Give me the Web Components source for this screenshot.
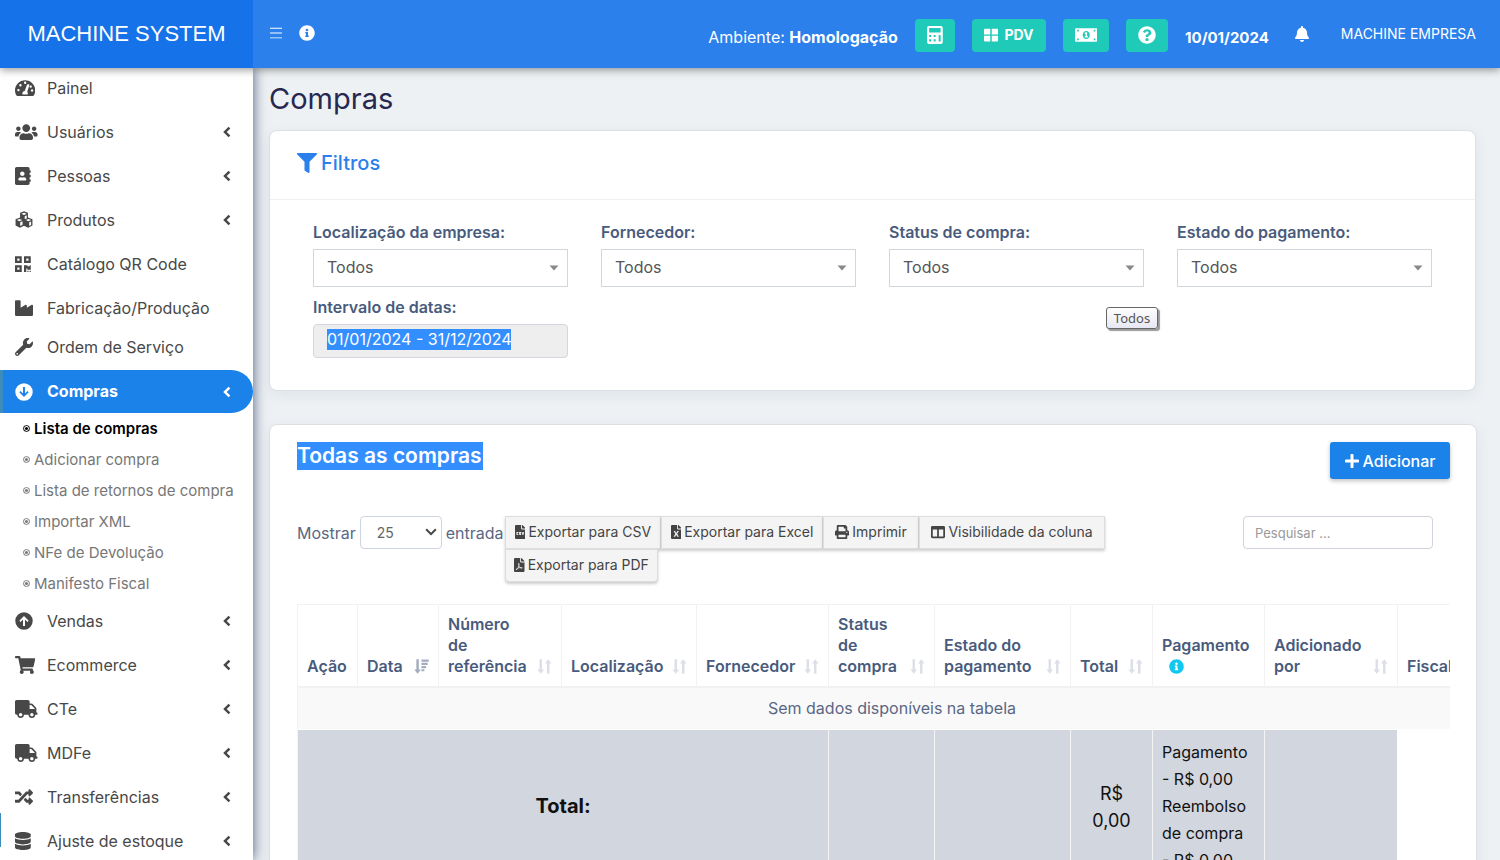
<!DOCTYPE html>
<html lang="pt-BR">
<head>
<meta charset="utf-8">
<title>Compras - Machine System</title>
<style>
  html, body { height: 100%; margin: 0; }
  body { font: 16px/21px Inter, "Open Sans", sans-serif; color: #5a6784; background: #edf1f4; }
</style>
</head>
<body>
<ms-app></ms-app>
<script>
const ICONS = {
  gauge: [576, 'M288 32C129 32 0 161 0 320c0 53 14 102 39 145 6 10 16 15 27 15h444c11 0 21-5 27-15 25-43 39-92 39-145C576 161 447 32 288 32zM288 72a34 34 0 1 1 0 68 34 34 0 0 1 0-68zM98 350a34 34 0 1 1 0-68 34 34 0 0 1 0 68zM154 210a34 34 0 1 1 0-68 34 34 0 0 1 0 68zM392 150c12 4 19 17 15 30l-60 186c12 12 19 29 19 46 0 12-3 22-8 32H218c-5-10-8-20-8-32 0-38 29-68 66-71l66-178c4-13 37-17 50-13zM446 250a34 34 0 1 1 0-68 34 34 0 0 1 0 68zM486 360a34 34 0 1 1 0-68 34 34 0 0 1 0 68z'],
  users: [640, 'M96 224c35.3 0 64-28.7 64-64s-28.7-64-64-64-64 28.7-64 64 28.7 64 64 64zm448 0c35.3 0 64-28.7 64-64s-28.7-64-64-64-64 28.7-64 64 28.7 64 64 64zm32 32h-64c-17.6 0-33.5 7.1-45.1 18.6 40.3 22.1 68.9 62 75.1 109.4h66c17.7 0 32-14.3 32-32v-32c0-35.3-28.7-64-64-64zm-256 0c61.9 0 112-50.1 112-112S381.9 32 320 32 208 82.1 208 144s50.1 112 112 112zm76.8 32h-8.3c-20.8 10-43.9 16-68.5 16s-47.6-6-68.5-16h-8.3C179.6 288 128 339.6 128 403.2V432c0 26.5 21.5 48 48 48h288c26.5 0 48-21.5 48-48v-28.8c0-63.6-51.6-115.2-115.2-115.2zm-223.7-13.4C161.5 263.1 145.6 256 128 256H64c-35.3 0-64 28.7-64 64v32c0 17.7 14.3 32 32 32h65.9c6.3-47.4 34.9-87.3 75.2-109.4z'],
  book: [448, 'M436 160c6.6 0 12-5.4 12-12v-40c0-6.6-5.4-12-12-12h-20V48c0-26.5-21.5-48-48-48H48C21.5 0 0 21.5 0 48v416c0 26.5 21.5 48 48 48h320c26.5 0 48-21.5 48-48v-48h20c6.6 0 12-5.4 12-12v-40c0-6.6-5.4-12-12-12h-20v-64h20c6.6 0 12-5.4 12-12v-40c0-6.6-5.4-12-12-12h-20v-64h20zm-228-32c35.3 0 64 28.7 64 64s-28.7 64-64 64-64-28.7-64-64 28.7-64 64-64zm112 236.8c0 10.6-10 19.2-22.4 19.2H118.4C106 384 96 375.4 96 364.8v-19.2c0-31.8 30.1-57.6 67.2-57.6h5c12.3 5.1 25.7 8 39.8 8s27.6-2.9 39.8-8h5c37.1 0 67.2 25.8 67.2 57.6v19.2z'],
  cubes: [512, 'M256 8l112 44v134l128 50v176l-124 62-116-58-116 58-124-62V236l128-50V52zM256 50l-76 30 76 32 76-32zM276 146v92l58-26v-92zM128 226l-76 30 76 32 76-32zM384 226l-76 30 76 32 76-32zM148 322v102l66-33v-98zM404 322v102l54-27v-100z'],
  qr: [448, 'M0 224h192V32H0v192zM64 96h64v64H64V96zm192-64v192h192V32H256zm128 128h-64V96h64v64zM0 480h192V288H0v192zm64-128h64v64H64v-64zm352-64h32v128h-96v-32h-32v96h-64V288h96v32h64v-32zm0 160h32v32h-32v-32zm-64 0h32v32h-32v-32z'],
  industry: [512, 'M475.115 163.781L336 252.309v-68.28c0-18.916-20.931-30.399-36.885-20.248L160 252.309V56c0-13.255-10.745-24-24-24H24C10.745 32 0 42.745 0 56v400c0 13.255 10.745 24 24 24h464c13.255 0 24-10.745 24-24V184.029c0-18.917-20.931-30.399-36.885-20.248z'],
  wrench: [512, 'M507.73 109.1c-2.24-9.03-13.54-12.09-20.12-5.51l-74.36 74.36-67.88-11.31-11.31-67.88 74.36-74.36c6.62-6.62 3.43-17.9-5.66-20.16-47.38-11.74-99.55.91-136.58 37.93-39.64 39.64-50.55 97.1-34.05 147.2L18.74 402.76c-24.99 24.99-24.99 65.51 0 90.5 24.99 24.99 65.51 24.99 90.5 0l213.21-213.21c50.12 16.71 107.47 5.68 147.37-34.22 37.07-37.07 49.7-89.32 37.91-136.73zM64 472a24 24 0 1 1 0-48 24 24 0 0 1 0 48z'],
  down: [512, 'M256 8a248 248 0 1 0 0 496 248 248 0 0 0 0-496zM284 112v188l70-72 36 38-134 134-134-134 36-38 70 72V112z'],
  up: [512, 'M256 504a248 248 0 1 0 0-496 248 248 0 0 0 0 496zM228 400V212l-70 72-36-38 134-134 134 134-36 38-70-72v188z'],
  cart: [576, 'M528.12 301.319l47.273-208C578.806 78.301 567.391 64 551.99 64H159.208l-9.166-44.81C147.758 8.021 137.93 0 126.529 0H24C10.745 0 0 10.745 0 24v16c0 13.255 10.745 24 24 24h69.883l70.248 343.435C147.325 417.1 136 435.222 136 456c0 30.928 25.072 56 56 56s56-25.072 56-56c0-15.674-6.447-29.835-16.824-40h209.647C430.447 426.165 424 440.326 424 456c0 30.928 25.072 56 56 56s56-25.072 56-56c0-22.172-12.888-41.332-31.579-50.405l5.517-24.276c3.413-15.018-8.002-29.319-23.403-29.319H218.117l-6.545-32h293.145c11.206 0 20.92-7.754 23.403-18.681z'],
  truck: [640, 'M624 352h-16V243.9c0-12.7-5.1-24.9-14.1-33.9L494 110.1c-9-9-21.2-14.1-33.9-14.1H416V48c0-26.5-21.5-48-48-48H48C21.5 0 0 21.5 0 48v320c0 26.5 21.5 48 48 48h16c0 53 43 96 96 96s96-43 96-96h128c0 53 43 96 96 96s96-43 96-96h48c8.8 0 16-7.2 16-16v-32c0-8.8-7.2-16-16-16zM160 464c-26.5 0-48-21.5-48-48s21.5-48 48-48 48 21.5 48 48-21.5 48-48 48zm320 0c-26.5 0-48-21.5-48-48s21.5-48 48-48 48 21.5 48 48-21.5 48-48 48zm80-208H416V144h44.1l99.9 99.9V256z'],
  random: [512, 'M504.971 359.029c9.373 9.373 9.373 24.569 0 33.941l-80 79.984c-15.01 15.01-40.971 4.49-40.971-16.971V416h-58.785a12.004 12.004 0 0 1-8.773-3.812l-70.556-75.596 53.333-57.143L352 336h32v-39.981c0-21.438 25.943-31.998 40.971-16.971l80 79.981zM12 176h84l52.781 56.551 53.333-57.143-70.556-75.596A11.999 11.999 0 0 0 122.785 96H12c-6.627 0-12 5.373-12 12v56c0 6.627 5.373 12 12 12zm372 0v39.984c0 21.46 25.961 31.98 40.971 16.971l80-79.984c9.373-9.373 9.373-24.569 0-33.941l-80-79.981C409.943 24.021 384 34.582 384 56.019V96h-58.785a12.004 12.004 0 0 0-8.773 3.812L96 336H12c-6.627 0-12 5.373-12 12v56c0 6.627 5.373 12 12 12h110.785c3.326 0 6.503-1.381 8.773-3.812L352 176h32z', 'nonzero'],
  database: [448, 'M448 73.143v45.714C448 159.143 347.667 192 224 192S0 159.143 0 118.857V73.143C0 32.857 100.333 0 224 0s224 32.857 224 73.143zM448 176v102.857C448 319.143 347.667 352 224 352S0 319.143 0 278.857V176c48.125 33.143 136.208 48.572 224 48.572S399.874 209.143 448 176zm0 160v102.857C448 479.143 347.667 512 224 512S0 479.143 0 438.857V336c48.125 33.143 136.208 48.572 224 48.572S399.874 369.143 448 336z'],
  chevron: [288, 'M204 60l64 64-132 132 132 132-64 64L8 256z'],
  filter: [512, 'M487.976 0H24.028C2.71 0-8.047 25.866 7.058 40.971L192 225.941V432c0 7.831 3.821 15.17 10.237 19.662l80 55.98C298.02 518.69 320 507.493 320 487.98V225.941l184.947-184.97C520.021 25.896 509.338 0 487.976 0z'],
  plus: [448, 'M416 208H272V64c0-17.67-14.33-32-32-32h-32c-17.67 0-32 14.33-32 32v144H32c-17.67 0-32 14.33-32 32v32c0 17.67 14.33 32 32 32h144v144c0 17.67 14.33 32 32 32h32c17.67 0 32-14.33 32-32V304h144c17.67 0 32-14.33 32-32v-32c0-17.67-14.33-32-32-32z'],
  question: [512, 'M504 256c0 136.997-111.043 248-248 248S8 392.997 8 256C8 119.083 119.043 8 256 8s248 111.083 248 248zM262.655 90c-54.497 0-89.255 22.957-116.549 63.758-3.536 5.286-2.353 12.415 2.715 16.258l34.699 26.31c5.205 3.947 12.621 3.008 16.665-2.122 17.864-22.658 30.113-35.797 57.303-35.797 20.429 0 45.698 13.148 45.698 32.958 0 14.976-12.363 22.667-32.534 33.976C247.128 238.528 216 254.941 216 296v4c0 6.627 5.373 12 12 12h56c6.627 0 12-5.373 12-12v-1.333c0-28.462 83.186-29.647 83.186-106.667 0-58.002-60.165-102-116.531-102zM256 338c-25.365 0-46 20.635-46 46 0 25.364 20.635 46 46 46s46-20.636 46-46c0-25.365-20.635-46-46-46z'],
  info: [512, 'M256 8C119.043 8 8 119.083 8 256c0 136.997 111.043 248 248 248s248-111.003 248-248C504 119.083 392.957 8 256 8zm0 110c23.196 0 42 18.804 42 42s-18.804 42-42 42-42-18.804-42-42 18.804-42 42-42zm56 254c0 6.627-5.373 12-12 12h-88c-6.627 0-12-5.373-12-12v-24c0-6.627 5.373-12 12-12h12v-64h-12c-6.627 0-12-5.373-12-12v-24c0-6.627 5.373-12 12-12h64c6.627 0 12 5.373 12 12v100h12c6.627 0 12 5.373 12 12v24z'],
  bell: [448, 'M224 512c35.32 0 63.97-28.65 63.97-64H160.03c0 35.35 28.65 64 63.97 64zm215.39-149.71c-19.32-20.76-55.47-51.99-55.47-154.29 0-77.7-54.48-139.9-127.94-155.16V32c0-17.67-14.32-32-31.98-32s-31.98 14.33-31.98 32v20.84C118.56 68.1 64.08 130.3 64.08 208c0 102.3-36.15 133.53-55.47 154.29-6 6.45-8.66 14.16-8.61 21.71.11 16.4 12.98 32 32.1 32h383.8c19.12 0 32-15.6 32.1-32 .05-7.55-2.61-15.27-8.61-21.71z'],
  calc: [448, 'M36 0h376l36 36v440l-36 36H36L0 476V36zM60 60v124h328V60zM60 256v56h56v-56zM190 256v56h56v-56zM60 376v66h56v-66zM190 376v66h56v-66zM332 256v186h56V256z'],
  grid: [448, 'M20 52h180v184H0V72zM248 52h180l20 20v164H248zM0 276h200v184H20L0 440zM248 276h200v164l-20 20H248z'],
  money: [640, 'M20 64h600l20 20v344l-20 20H20L0 428V84zM320 144c-60 0-100 50-100 112s40 112 100 112 100-50 100-112-40-112-100-112zM300 180h44v114h24v34h-92v-34h24v-68h-24v-26zM60 110v48h48v-48zM532 110v48h48v-48zM60 354v48h48v-48zM532 354v48h48v-48z'],
  bars: [448, 'M0 60h448v36H0zM0 238h448v36H0zM0 416h448v36H0z'],
  csv: [384, 'M0 24L24 0h200v136l24 24h136v328l-24 24H24L0 488zM256 0h14l114 114v14H256zM54 260v110h70v-34H92v-42h32v-34zM150 260v66h36v12h-36v32h72v-66h-36v-12h36v-32zM240 260l32 110h32l32-110h-34l-14 56-14-56z'],
  excel: [384, 'M0 24L24 0h200v136l24 24h136v328l-24 24H24L0 488zM256 0h14l114 114v14H256zM94 220l66 104-66 104h56l42-70 42 70h56l-66-104 66-104h-56l-42 70-42-70z'],
  pdf: [384, 'M0 24L24 0h200v136l24 24h136v328l-24 24H24L0 488zM256 0h14l114 114v14H256zM160 190c-8 40 2 72 4 90-12 38-30 70-42 92-30 10-62 36-54 58 22 26 54-6 76-46 26-10 52-16 78-20 40 26 96 26 92-4-4-26-46-26-78-24-18-14-32-34-42-60 8-36 12-86-14-96-12 0-18 4-20 10zM184 300l32 42-56 12z'],
  print: [512, 'M448 192V77.25c0-8.49-3.37-16.62-9.37-22.63L393.37 9.37c-6-6-14.14-9.37-22.63-9.37H96C78.33 0 64 14.33 64 32v160c-35.35 0-64 28.65-64 64v112c0 8.84 7.16 16 16 16h48v96c0 17.67 14.33 32 32 32h320c17.67 0 32-14.33 32-32v-96h48c8.84 0 16-7.16 16-16V256c0-35.35-28.65-64-64-64zm-64 256H128v-96h256v96zm0-224H128V64h192v48c0 8.84 7.16 16 16 16h48v96zm48 72c-13.25 0-24-10.75-24-24 0-13.26 10.75-24 24-24s24 10.74 24 24c0 13.25-10.75 24-24 24z'],
  columns: [512, 'M464 32H48C21.49 32 0 53.49 0 80v352c0 26.51 21.49 48 48 48h416c26.51 0 48-21.49 48-48V80c0-26.51-21.49-48-48-48zM224 416H64V160h160v256zm224 0H288V160h160v256z'],
  sort: [512, 'M86 10h84v350h72L128 504 14 360h72zM342 502h84V152h72L384 8 270 152h72z'],
  sorted: [512, 'M80 10h84v350h72L122 504 8 360h72zM254 16h250v76H254zM254 130h212v72H254zM254 240h160v72H254zM254 350h100v72H254z'],
  caret: [512, 'M26 126h460L256 386z'],
  arrow: [512, 'M20 170l60-60 176 176 176-176 60 60-236 236z'],
  dot: [512, 'M256 16a240 240 0 1 0 0 480 240 240 0 0 0 0-480zM256 76a180 180 0 1 1 0 360 180 180 0 0 1 0-360zM256 146a110 110 0 1 0 0 220 110 110 0 0 0 0-220z']
};

function define(name, html, setup) {
  const t = document.createElement('template');
  t.innerHTML = html;
  customElements.define(name, class extends HTMLElement {
    connectedCallback() {
      if (this.shadowRoot) return;
      this.attachShadow({ mode: 'open' }).append(t.content.cloneNode(true));
      if (setup) setup(this, this.shadowRoot);
    }
  });
}

define('ms-icon', `<style>:host{display:inline-flex;flex:none;height:16px}svg{height:100%;display:block;fill:currentColor}</style>`, (el, root) => {
  const [w, d, rule = 'evenodd'] = ICONS[el.getAttribute('name')];
  root.innerHTML += `<svg viewBox="0 0 ${w} 512" aria-hidden="true"><path fill-rule="${rule}" d="${d}"/></svg>`;
});

define('ms-brand', `<style>
  :host{display:flex;align-items:center;justify-content:center;background:#1572e8;height:68px}
  a{font:22px/28px "Liberation Sans",Arial,sans-serif;color:#fff;text-decoration:none;white-space:nowrap}
</style><a href="#"><slot></slot></a>`);

define('ms-topbar', `<style>
  :host{display:flex;align-items:center;height:68px;box-sizing:border-box;padding:0 24px 0 17px;background:#2b80ec;color:#fff;white-space:nowrap}
  button{border:0;font:700 14px/20px Inter,sans-serif;color:#fff;cursor:pointer}
  .plain{background:none;padding:0;display:flex;margin-bottom:2px}
  .plain + .plain{margin-left:17px}
  .teal{display:flex;align-items:center;justify-content:center;gap:7px;background:#1fcab8;border-radius:4px;height:33px;padding:0 12px}
  .teal ms-icon{height:18px}
  .teal .win{height:16px}
  .tools{display:flex;align-items:center;gap:17px;margin-left:auto;margin-top:2px}
  .row{display:flex;gap:17px}
  .small{height:14px}
  .bell{margin:0 32px 0 26px}
  .account{color:#fff;text-decoration:none;font-size:14px;margin-bottom:2px}
  time{font-weight:700;font-size:15px;margin-top:4px}
  .env{margin-top:4px}
</style>
<button class="plain" aria-label="Menu"><ms-icon class="small" name="bars"></ms-icon></button>
<button class="plain" aria-label="Informações"><ms-icon name="info"></ms-icon></button>
<div class="tools">
  <span class="env">Ambiente: <b>Homologação</b></span>
  <div class="row">
    <button class="teal" aria-label="Calculadora"><ms-icon name="calc"></ms-icon></button>
    <button class="teal"><ms-icon class="win" name="grid"></ms-icon>PDV</button>
    <button class="teal" aria-label="Caixa"><ms-icon name="money"></ms-icon></button>
    <button class="teal" aria-label="Ajuda"><ms-icon name="question"></ms-icon></button>
  </div>
  <time datetime="2024-01-10">10/01/2024</time>
</div>
<button class="plain bell" aria-label="Notificações"><ms-icon name="bell"></ms-icon></button>
<a class="account" href="#">MACHINE EMPRESA</a>`);

define('ms-nav-item', `<style>
  :host{display:block;position:relative}
  a{display:flex;align-items:center;height:36px;padding:0 22px 0 15px;color:#484848;text-decoration:none;white-space:nowrap;font-size:16px}
  .icon{width:32px;display:flex}
  .icon ms-icon{height:18px}
  .text{flex:1}
  .chev{height:14px}
  :host(:not([more])) .chev{display:none}
  :host([active]) a{height:43px;background:#1b82ea;color:#fff;font-weight:700;border-left:3px solid #3c8dbc;padding-left:12px;border-radius:0 22px 22px 0}
  :host([marked])::before{content:"";position:absolute;left:0;top:-10px;width:1px;height:34px;background:#3c8dbc}
</style><a href="#"><span class="icon"></span><span class="text"><slot></slot></span><ms-icon class="chev" name="chevron"></ms-icon></a>`, (el, root) => {
  root.querySelector('.icon').innerHTML = `<ms-icon name="${el.getAttribute('icon')}"></ms-icon>`;
});

define('ms-sub-item', `<style>
  :host{display:block}
  a{display:flex;align-items:center;gap:4px;height:31px;padding-left:23px;font-size:15px;color:#777;text-decoration:none;white-space:nowrap}
  ms-icon{height:7px}
  :host([active]) a{color:#000;font-weight:600}
</style><a href="#"><ms-icon name="dot"></ms-icon><slot></slot></a>`);

define('ms-sidebar', `<style>
  :host{display:block;background:#fff}
  .group{display:grid;gap:8px;padding-top:2px}
  .service{padding:3px 0 5px}
  .after{padding-top:4px}
</style>
<nav>
  <div class="group">
    <ms-nav-item icon="gauge">Painel</ms-nav-item>
    <ms-nav-item icon="users" more>Usuários</ms-nav-item>
    <ms-nav-item icon="book" more>Pessoas</ms-nav-item>
    <ms-nav-item icon="cubes" more>Produtos</ms-nav-item>
    <ms-nav-item icon="qr">Catálogo QR Code</ms-nav-item>
    <ms-nav-item icon="industry">Fabricação/Produção</ms-nav-item>
  </div>
  <div class="service"><ms-nav-item icon="wrench">Ordem de Serviço</ms-nav-item></div>
  <ms-nav-item icon="down" more active>Compras</ms-nav-item>
  <div>
    <ms-sub-item active>Lista de compras</ms-sub-item>
    <ms-sub-item>Adicionar compra</ms-sub-item>
    <ms-sub-item>Lista de retornos de compra</ms-sub-item>
    <ms-sub-item>Importar XML</ms-sub-item>
    <ms-sub-item>NFe de Devolução</ms-sub-item>
    <ms-sub-item>Manifesto Fiscal</ms-sub-item>
  </div>
  <div class="group after">
    <ms-nav-item icon="up" more>Vendas</ms-nav-item>
    <ms-nav-item icon="cart" more>Ecommerce</ms-nav-item>
    <ms-nav-item icon="truck" more>CTe</ms-nav-item>
    <ms-nav-item icon="truck" more>MDFe</ms-nav-item>
    <ms-nav-item icon="random" more>Transferências</ms-nav-item>
    <ms-nav-item icon="database" more marked>Ajuste de estoque</ms-nav-item>
  </div>
</nav>`);

define('ms-card', `<style>
  :host{display:block;position:relative;background:#fff;border:1px solid #dddfe2;border-radius:8px;box-shadow:0 4px 14px rgba(60,80,100,.08)}
</style><slot></slot>`);

define('ms-select-field', `<style>
  :host{display:block}
  label{display:block;font-weight:600;color:#495b7d;margin-bottom:6px}
  .box{position:relative}
  select{appearance:none;display:block;width:100%;height:38px;box-sizing:border-box;border:1px solid #d2d6de;border-radius:0;background:#fff;color:#555;font:inherit;padding:0 28px 2px 13px}
  ms-icon{position:absolute;right:9px;top:14px;height:10px;color:#888;pointer-events:none}
</style><label for="s"></label><div class="box"><select id="s"><option>Todos</option></select><ms-icon name="caret"></ms-icon></div>`, (el, root) => {
  root.querySelector('label').textContent = el.getAttribute('label');
});

define('ms-filters', `<style>
  :host{display:block}
  h2{display:flex;align-items:center;gap:4px;margin:0;padding:0 27px 4px;height:64px;border-bottom:1px solid #f1f1f1;font-size:20px;line-height:28px;font-weight:500;color:#2b80ec}
  h2 ms-icon{height:20px}
  .grid{display:grid;grid-template-columns:repeat(4,1fr);column-gap:33px;row-gap:10px;padding:22px 43px 32px}
  label{display:block;font-weight:600;color:#495b7d;margin-bottom:6px}
  input{display:block;width:100%;height:34px;box-sizing:border-box;border:1px solid #d2d6de;border-radius:4px;color:#fff;font:inherit;padding:0 13px 5px;background:linear-gradient(#338fff,#338fff) 13px 4px/184px 21px no-repeat #eee}
  .tip{position:absolute;right:317px;top:176px;width:50px;height:20px;border:1px solid #666;border-radius:3px;background:linear-gradient(#fff,#e7e7f2);box-shadow:2px 2px 1px rgba(0,0,0,.4);font:13px/20px "Noto Sans",sans-serif;text-align:center;color:#555}
</style>
<ms-card>
  <h2><ms-icon name="filter"></ms-icon>Filtros</h2>
  <div class="grid">
    <ms-select-field label="Localização da empresa:"></ms-select-field>
    <ms-select-field label="Fornecedor:"></ms-select-field>
    <ms-select-field label="Status de compra:"></ms-select-field>
    <ms-select-field label="Estado do pagamento:"></ms-select-field>
    <div><label for="range">Intervalo de datas:</label><input id="range" readonly value="01/01/2024 - 31/12/2024"></div>
  </div>
  <div class="tip" role="tooltip">Todos</div>
</ms-card>`);

define('ms-table', `<style>
  :host{display:block;overflow:hidden}
  table{width:1189px;table-layout:fixed;border-collapse:separate;border-spacing:0}
  th,td{box-sizing:border-box;padding:0 9px;border-left:1px solid #f2f2f2}
  thead th{height:84px;border-top:1px solid #f2f2f2;border-bottom:2px solid #f2f2f2;vertical-align:bottom;text-align:left;padding-bottom:9px;line-height:21px;color:#495b7d;font-weight:600;white-space:nowrap}
  .h{display:flex;align-items:flex-end;justify-content:space-between}
  .h ms-icon{height:15px;margin-bottom:3px;color:#dcdfe7}
  .h ms-icon[name=sorted]{color:#a4adbe}
  .i{height:15px;color:#12c8ef;margin-left:7px;vertical-align:-2px}
  tbody td{height:42px;background:#f9f9f9;text-align:center;border-bottom:1px solid #fff}
  tfoot td{background:#d2d6de;color:#111;text-align:center;font-size:18px;line-height:27px;border-left-color:#f4f4f4;padding-top:9px;padding-bottom:7px}
  tfoot td.sum{font-weight:700;font-size:20px}
  tfoot td.pay{font-size:16px;text-align:left;white-space:nowrap}
  tfoot td.none{background:#fff;border:0}
</style>
<table>
  <colgroup><col style="width:60px"><col style="width:81px"><col style="width:123px"><col style="width:135px"><col style="width:132px"><col style="width:106px"><col style="width:136px"><col style="width:82px"><col style="width:112px"><col style="width:133px"><col></colgroup>
  <thead><tr>
    <th scope="col">Ação</th>
    <th scope="col"><div class="h"><span>Data</span><ms-icon name="sorted"></ms-icon></div></th>
    <th scope="col"><div class="h"><span>Número<br>de<br>referência</span><ms-icon name="sort"></ms-icon></div></th>
    <th scope="col"><div class="h"><span>Localização</span><ms-icon name="sort"></ms-icon></div></th>
    <th scope="col"><div class="h"><span>Fornecedor</span><ms-icon name="sort"></ms-icon></div></th>
    <th scope="col"><div class="h"><span>Status<br>de<br>compra</span><ms-icon name="sort"></ms-icon></div></th>
    <th scope="col"><div class="h"><span>Estado do<br>pagamento</span><ms-icon name="sort"></ms-icon></div></th>
    <th scope="col"><div class="h"><span>Total</span><ms-icon name="sort"></ms-icon></div></th>
    <th scope="col">Pagamento<br><ms-icon class="i" name="info"></ms-icon></th>
    <th scope="col"><div class="h"><span>Adicionado<br>por</span><ms-icon name="sort"></ms-icon></div></th>
    <th scope="col">Fiscal</th>
  </tr></thead>
  <tbody><tr><td colspan="11">Sem dados disponíveis na tabela</td></tr></tbody>
  <tfoot><tr><td class="sum" colspan="5">Total:</td><td></td><td></td><td>R$<br>0,00</td><td class="pay">Pagamento<br>- R$ 0,00<br>Reembolso<br>de compra<br>- R$ 0,00</td><td></td><td class="none"></td></tr></tfoot>
</table>`);

define('ms-purchases', `<style>
  :host{display:block;margin-right:-1px}
  ms-card{padding:17px 26px 24px 27px}
  header{display:flex;justify-content:space-between;align-items:flex-start;margin-bottom:37px}
  h2{margin:0;font-size:21px;line-height:28px;font-weight:600}
  mark{display:block;background:#338fff;color:#fff;width:186px;white-space:nowrap}
  button{font:14px/20px Inter,sans-serif;cursor:pointer;white-space:nowrap}
  .add{display:flex;align-items:center;justify-content:center;gap:4px;width:120px;height:37px;border:0;border-radius:3px;background:#1b82ea;color:#fff;font-size:16px;font-weight:500;box-shadow:0 2px 4px rgba(0,0,0,.25)}
  .bar{display:flex;align-items:flex-start;margin-bottom:22px;padding-right:17px}
  .length{display:flex;align-items:center;gap:4px;line-height:30px;width:208px;white-space:nowrap}
  .pick{position:relative;display:block;width:82px}
  select{appearance:none;display:block;width:100%;height:33px;border:1px solid #ced4e0;border-radius:4px;background:#fff;color:#666;font:14px/20px Inter,sans-serif;padding:0 16px}
  .pick ms-icon{position:absolute;right:5px;top:10px;height:12px;color:#444;pointer-events:none}
  .exports{display:grid;grid-template-columns:156px 162px 96px 186px}
  .exports button{display:flex;align-items:center;justify-content:center;gap:3px;height:33px;padding:0 0 2px;border:1px solid #ddd;background:#f4f4f4;color:#444;font-size:14px;box-shadow:0 2px 3px rgba(0,0,0,.2)}
  .exports button:last-child{border-radius:0 0 4px 4px;margin-right:3px}
  .exports ms-icon{height:14px}
  input{margin-left:auto;width:190px;height:33px;box-sizing:border-box;border:1px solid #ced4da;border-radius:4px;padding:0 11px;font:13px/20px Inter,sans-serif}
  input::placeholder{color:#999}
</style>
<ms-card>
  <header><h2><mark>Todas as compras</mark></h2><button class="add"><ms-icon name="plus"></ms-icon>Adicionar</button></header>
  <div class="bar">
    <label class="length">Mostrar <span class="pick"><select><option>25</option></select><ms-icon name="arrow"></ms-icon></span> entrada</label>
    <div class="exports">
      <button><ms-icon name="csv"></ms-icon>Exportar para CSV</button>
      <button><ms-icon name="excel"></ms-icon>Exportar para Excel</button>
      <button><ms-icon name="print"></ms-icon>Imprimir</button>
      <button><ms-icon name="columns"></ms-icon>Visibilidade da coluna</button>
      <button><ms-icon name="pdf"></ms-icon>Exportar para PDF</button>
    </div>
    <input type="search" aria-label="Pesquisar" placeholder="Pesquisar ...">
  </div>
  <ms-table></ms-table>
</ms-card>`);

define('ms-app', `<style>
  :host{display:grid;grid-template:68px minmax(0,1fr) / 253px minmax(0,1fr);height:100vh;overflow:hidden}
  .head{grid-column:1 / -1;display:grid;grid-template-columns:subgrid;position:relative;z-index:3;box-shadow:0 2px 8px rgba(0,0,0,.4)}
  ms-sidebar{position:relative;z-index:2;overflow:hidden auto;scrollbar-width:none}
  .side{position:relative;z-index:2;display:grid;min-height:0;box-shadow:1px 0 12px #5d6b89}
  main{min-width:0;overflow:hidden auto;scrollbar-width:none;padding:13px 24px 24px 16px}
  h1{margin:0 0 13px;font-size:29px;line-height:36px;font-weight:400;color:#27284f}
  ms-filters{margin-bottom:33px}
</style>
<div class="head"><ms-brand>MACHINE SYSTEM</ms-brand><ms-topbar></ms-topbar></div>
<div class="side"><ms-sidebar></ms-sidebar></div>
<main>
  <h1>Compras</h1>
  <ms-filters></ms-filters>
  <ms-purchases></ms-purchases>
</main>`);
</script>
</body>
</html>
